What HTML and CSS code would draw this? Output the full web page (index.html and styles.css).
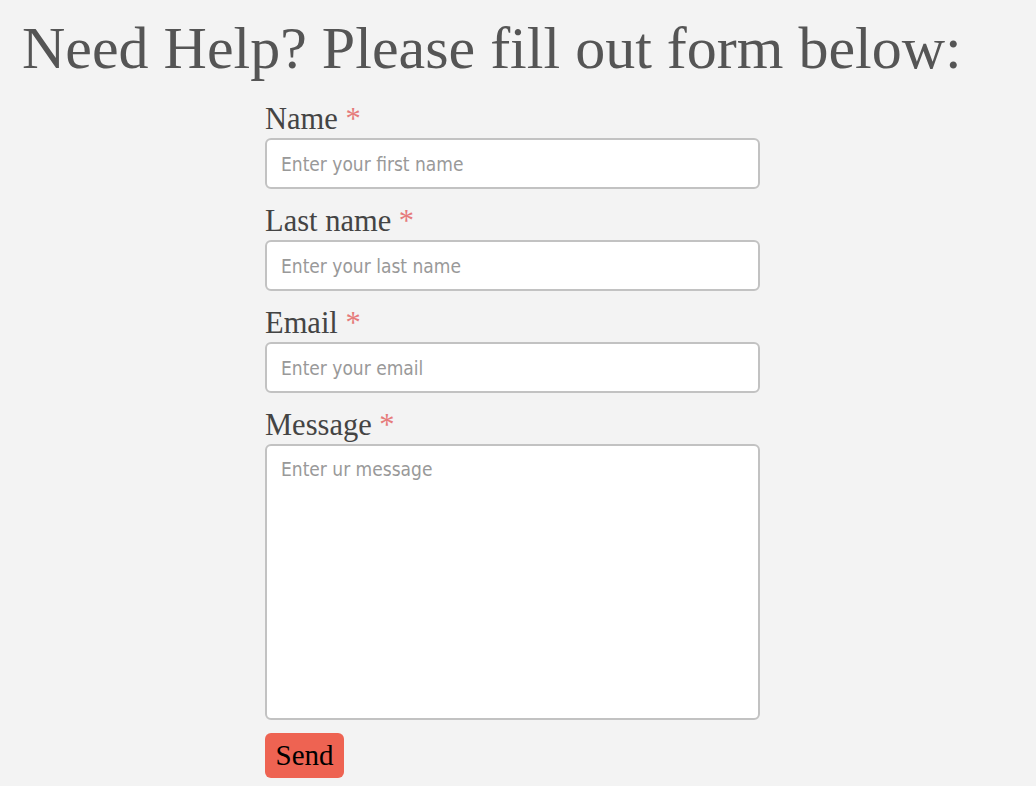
FILE: index.html
```html
<!DOCTYPE html>
<html>
<head>
<meta charset="utf-8">
<link rel="stylesheet" href="styles.css">
</head>
<body>
<h1 class="title">Need Help? Please fill out form below:</h1>
<form class="form">
  <label class="label">Name <span class="req">*</span></label>
  <input class="field" type="text" placeholder="Enter your first name">
  <label class="label">Last name <span class="req">*</span></label>
  <input class="field" type="text" placeholder="Enter your last name">
  <label class="label">Email <span class="req">*</span></label>
  <input class="field" type="text" placeholder="Enter your email">
  <label class="label">Message <span class="req">*</span></label>
  <textarea class="field area" placeholder="Enter ur message"></textarea>
  <button class="send" type="button">Send</button>
</form>
</body>
</html>
```
FILE: styles.css
```css
html, body {
  margin: 0;
  padding: 0;
  background: #f3f3f3;
}
.title {
  margin: 0;
  padding: 15px 0 0 22px;
  font-family: "Liberation Serif", serif;
  font-weight: normal;
  font-size: 60px;
  line-height: 66px;
  color: #555;
}
.form {
  display: flex;
  flex-direction: column;
  align-items: flex-start;
  width: 495px;
  margin-left: 265px;
  padding-top: 21px;
}
.label {
  font-family: "Liberation Serif", serif;
  font-size: 30.5px;
  line-height: 34px;
  color: #444;
}
.req {
  color: #e67b7b;
}
.field {
  box-sizing: border-box;
  width: 495px;
  height: 51px;
  margin: 2px 0 15px;
  padding: 0 14px;
  border: 2px solid #c2c2c2;
  border-radius: 6px;
  background: #fff;
  font-family: "DejaVu Sans Condensed", "DejaVu Sans", sans-serif;
  font-stretch: condensed;
  font-size: 19px;
  color: #333;
  outline: none;
}
.field::placeholder {
  color: #999;
}
.area {
  height: 276px;
  padding-top: 12px;
  resize: none;
  margin-bottom: 13px;
}
.send {
  box-sizing: border-box;
  width: 79px;
  height: 45px;
  padding: 0;
  border: none;
  border-radius: 6px;
  background: #ee6352;
  font-family: "Liberation Serif", serif;
  font-size: 29px;
  color: #000;
}
```
